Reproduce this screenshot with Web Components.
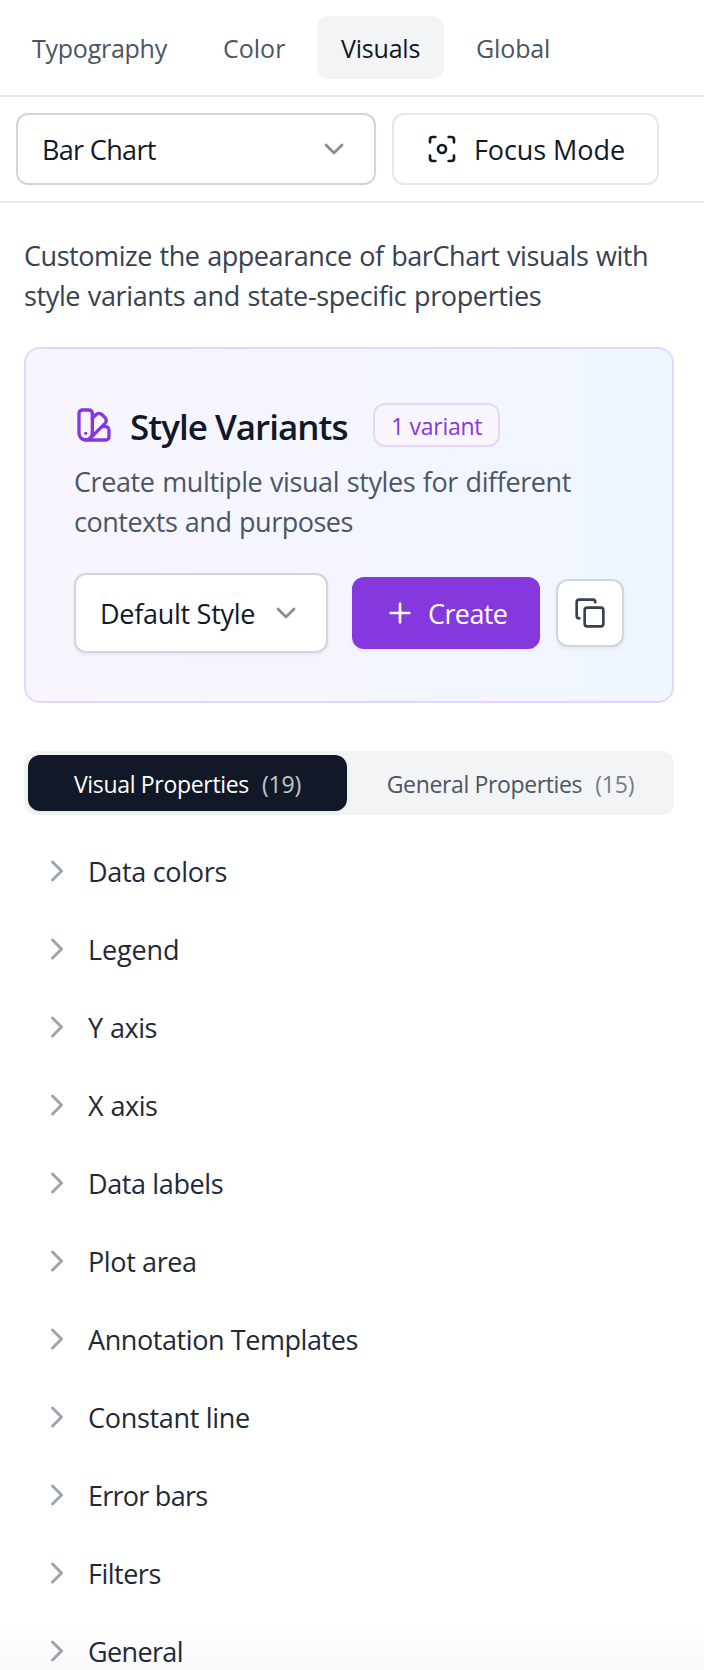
<!DOCTYPE html>
<html lang="en">
<head>
<meta charset="utf-8">
<title>Visual styles</title>
<style>
html,body{margin:0;background:#fff}
body{height:1670px;overflow:hidden;font-family:"Open Sans","Noto Sans",sans-serif;color:#111827}
</style>
</head>
<body>
<style-panel></style-panel>
<script>
const define=(name,html,setup)=>customElements.define(name,class extends HTMLElement{
  connectedCallback(){
    if(this.shadowRoot)return;
    const t=document.createElement('template');
    t.innerHTML=html;
    this.attachShadow({mode:'open'}).append(t.content.cloneNode(true));
    if(setup)setup.call(this,this.shadowRoot);
  }
});

const ICONS={
  down:'<path d="m6 9 6 6 6-6"/>',
  right:'<path d="m9 18 6-6-6-6"/>',
  plus:'<path d="M5 12h14M12 5v14"/>',
  focus:'<circle cx="12" cy="12" r="3"/><path d="M3 7V5a2 2 0 0 1 2-2h2M17 3h2a2 2 0 0 1 2 2v2M21 17v2a2 2 0 0 1-2 2h-2M7 21H5a2 2 0 0 1-2-2v-2"/>',
  copy:'<rect width="14" height="14" x="8" y="8" rx="2"/><path d="M4 16c-1.1 0-2-.9-2-2V4c0-1.1.9-2 2-2h10c1.1 0 2 .9 2 2"/>',
  swatch:'<path d="M11 17a4 4 0 0 1-8 0V5a2 2 0 0 1 2-2h4a2 2 0 0 1 2 2Z"/><path d="M16.7 13H19a2 2 0 0 1 2 2v4a2 2 0 0 1-2 2H7"/><path d="M7 17h.01"/><path d="m11 8 2.3-2.3a2.4 2.4 0 0 1 3.404.004L18.6 7.6a2.4 2.4 0 0 1 .026 3.434L9.9 19.8"/>'
};

define('ui-icon',`<style>:host{display:block;flex:none}svg{display:block}</style>
<svg viewBox="0 0 24 24" fill="none" stroke="currentColor" stroke-width="2" stroke-linecap="round" stroke-linejoin="round"></svg>`,function(r){
  const s=r.querySelector('svg'),n=this.getAttribute('size')||32;
  s.setAttribute('width',n);s.setAttribute('height',n);
  s.innerHTML=ICONS[this.getAttribute('name')];
});

/* A single line of text: size, tracking and line height come from attributes. */
define('ui-text',`<style>:host{display:block;white-space:nowrap}</style><slot></slot>`,function(){
  const a=n=>this.getAttribute(n);
  this.style.fontSize=(a('size')||27)+'px';
  this.style.letterSpacing=(a('track')||0)+'px';
  this.style.wordSpacing=(a('words')||0)+'px';
  this.style.lineHeight=(a('line')||40)+'px';
});

define('nav-tab',`<style>
:host{display:flex;box-sizing:border-box;height:63px;padding:1px 0 0 24px;align-items:center;border-radius:12px;color:#4b5563}
:host([active]){background:#f3f4f6;color:#111827}
</style><slot></slot>`);

define('ui-button',`<style>
:host{display:flex;box-sizing:border-box;align-items:center;height:72px;border:2px solid #e5e7eb;border-radius:12px;background:#fff;flex:none}
:host([kind=select]){border-color:#d1d5db}
:host([raised]){box-shadow:0 2px 4px rgba(0,0,0,.06)}
:host([kind=primary]){background:#8638df;border-color:#8638df;color:#fff}
:host([kind=icon]){border-color:#d1d5db;color:#374151;justify-content:center;height:68px}
</style><slot></slot>`);

define('variant-card',`<style>
:host{display:block;box-sizing:border-box;height:356px;margin-top:31px;padding:48px 46px 0 48px;border:2px solid #e6d6fd;border-radius:16px;background:linear-gradient(90deg,#f9f5ff,#eff6ff)}
.head{display:flex;align-items:center;height:56px}
.head ui-icon{color:#8638df}
.title{margin:4px 0 0 16px;width:219px;font-weight:600}
.badge{display:flex;box-sizing:border-box;width:127px;height:44px;margin-left:24px;padding:1px 0 0 16px;align-items:center;border:2px solid #e6d6fd;border-radius:12px;background:#f9f5ff;color:#8638df}
.desc{color:#4b5563;margin-top:9px}
.row{display:flex;align-items:center;margin-top:31px}
.muted{color:#888b93}
</style>
<div class="head"><ui-icon name="swatch" size="40"></ui-icon><ui-text class="title" size="35" track="-.98" line="50">Style Variants</ui-text><div class="badge"><ui-text size="23" track="-.28" line="32">1 variant</ui-text></div></div>
<div class="desc"><ui-text track="-.4" words="1">Create multiple visual styles for different</ui-text><ui-text track="-.48" words="1">contexts and purposes</ui-text></div>
<div class="row">
<ui-button kind="select" raised style="width:254px;height:80px;padding-left:24px"><ui-text track="-.28" style="width:158px;margin:1px 12px 0 0">Default Style</ui-text><ui-icon class="muted" name="down"></ui-icon></ui-button>
<ui-button kind="primary" raised style="width:188px;margin-left:24px;padding-left:30px"><ui-icon name="plus"></ui-icon><ui-text track="-.6" style="margin:1px 0 0 12px">Create</ui-text></ui-button>
<ui-button kind="icon" raised style="width:68px;margin-left:16px"><ui-icon name="copy"></ui-icon></ui-button>
</div>`);

define('property-tab',`<style>
:host{display:flex;flex:1;align-items:center;justify-content:center;gap:13px;padding-top:1px;border-radius:12px;color:#4b5563}
:host([active]){background:#111827;color:#fff;box-shadow:0 2px 4px rgba(0,0,0,.06)}
.count{opacity:.75}
</style><slot></slot><div class="count"><slot name="count"></slot></div>`);

define('property-row',`<style>
:host{display:flex;align-items:center;height:78px;padding-left:15px;color:#1f2937}
ui-icon{color:#9ca3af}
.label{margin:2px 0 0 13px}
</style><ui-icon name="right" size="36"></ui-icon><div class="label"><slot></slot></div>`);

define('style-panel',`<style>
:host{display:block;height:1670px;overflow:hidden;position:relative}
nav{display:flex;gap:8px;box-sizing:border-box;height:97px;padding:16px 8px 0;border-bottom:2px solid #e5e7eb}
.bar{display:flex;gap:16px;box-sizing:border-box;height:106px;padding:16px 16px 0;border-bottom:2px solid #e5e7eb}
.muted{color:#888b93}
main{padding:33px 30px 0 24px}
.intro{color:#374151}
.tabs{display:flex;gap:4px;box-sizing:border-box;height:64px;margin-top:48px;padding:4px;border-radius:12px;background:#f3f4f6}
.list{margin-top:17px}
.fade{position:absolute;left:0;right:0;bottom:0;height:48px;background:linear-gradient(to bottom,rgba(0,0,0,0),rgba(0,0,0,.025));pointer-events:none}
</style>
<nav>
<nav-tab style="width:184px"><ui-text size="25" track="-.25">Typography</ui-text></nav-tab>
<nav-tab style="width:109px;padding-left:23px"><ui-text size="25" track="0">Color</ui-text></nav-tab>
<nav-tab active style="width:127px"><ui-text size="25" track="-.2">Visuals</ui-text></nav-tab>
<nav-tab style="width:121px"><ui-text size="25" track="-.12">Global</ui-text></nav-tab>
</nav>
<div class="bar">
<ui-button kind="select" style="width:360px;padding:0 24px"><ui-text style="flex:1;margin-top:1px" track="-.66">Bar Chart</ui-text><ui-icon class="muted" name="down"></ui-icon></ui-button>
<ui-button style="width:267px;padding-left:32px"><ui-icon name="focus"></ui-icon><ui-text track="-.08" style="margin:1px 0 0 16px">Focus Mode</ui-text></ui-button>
</div>
<main>
<div class="intro"><ui-text track="-.44" words="1">Customize the appearance of barChart visuals with</ui-text><ui-text track="-.37" words="1">style variants and state-specific properties</ui-text></div>
<variant-card></variant-card>
<div class="tabs">
<property-tab active><ui-text size="23" track="-.32" line="32">Visual Properties</ui-text><ui-text slot="count" size="23" track="-.2" line="32">(19)</ui-text></property-tab>
<property-tab><ui-text size="23" track="-.36" line="32">General Properties</ui-text><ui-text slot="count" size="23" track="-.2" line="32">(15)</ui-text></property-tab>
</div>
<div class="list">
<property-row><ui-text track="-.31">Data colors</ui-text></property-row>
<property-row><ui-text track="-.12">Legend</ui-text></property-row>
<property-row><ui-text track="-.5" words="1">Y axis</ui-text></property-row>
<property-row><ui-text track="-.5" words="1">X axis</ui-text></property-row>
<property-row><ui-text track="-.38">Data labels</ui-text></property-row>
<property-row><ui-text track="-.38">Plot area</ui-text></property-row>
<property-row><ui-text track="-.42">Annotation Templates</ui-text></property-row>
<property-row><ui-text track="-.3">Constant line</ui-text></property-row>
<property-row><ui-text track="-.75">Error bars</ui-text></property-row>
<property-row><ui-text track="-.5">Filters</ui-text></property-row>
<property-row><ui-text track="-.65">General</ui-text></property-row>
</div>
</main>
<div class="fade"></div>`);
</script>
</body>
</html>
